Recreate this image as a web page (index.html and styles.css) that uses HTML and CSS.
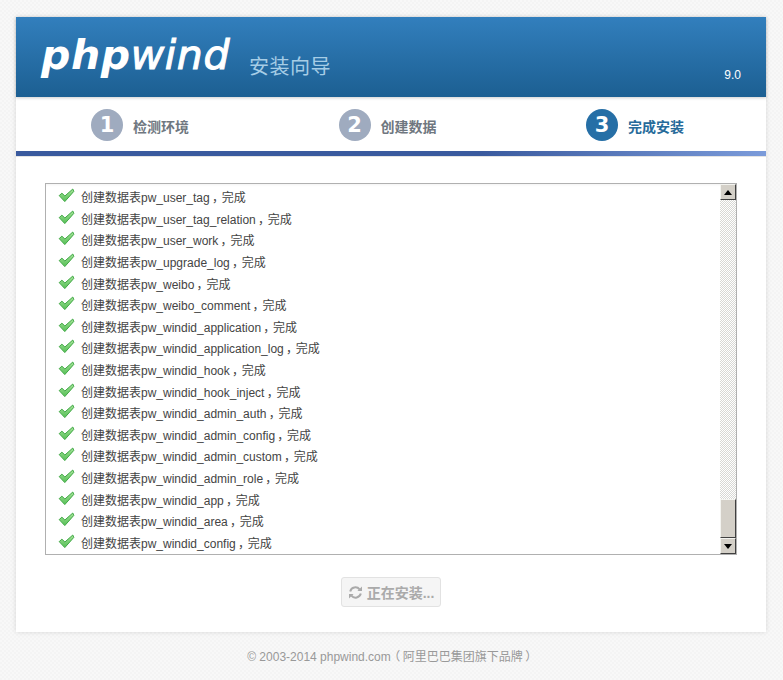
FILE: index.html
```html
<!DOCTYPE html>
<html lang="zh-CN">
<head>
<meta charset="utf-8">
<title>phpwind 安装向导</title>
<link rel="stylesheet" href="styles.css">
</head>
<body>
<svg class="defs" width="0" height="0" aria-hidden="true">
  <symbol id="ok" viewBox="0 0 17 15">
    <defs>
      <linearGradient id="okfill" x1="0" y1="0" x2="0" y2="1">
        <stop offset="0" stop-color="#a6e39a"/>
        <stop offset="1" stop-color="#55bf55"/>
      </linearGradient>
    </defs>
    <path d="M1.2 7.6 3.9 5.2l3 2.8L14.8 1l1 2.4-9 10.2z" fill="url(#okfill)" stroke="#3fa844" stroke-width="1" stroke-linejoin="round"/>
  </symbol>
</svg>
<div class="wrap">
  <header class="top">
    <div class="logo">php<span class="logo-thin">wind</span></div>
    <div class="guide">安装向导</div>
    <div class="ver">9.0</div>
  </header>
  <ol class="steps">
    <li class="step"><span class="num">1</span><span class="label">检测环境</span></li>
    <li class="step"><span class="num">2</span><span class="label">创建数据</span></li>
    <li class="step current"><span class="num">3</span><span class="label">完成安装</span></li>
  </ol>
  <div class="bar"></div>
  <main class="main">
    <div class="box">
      <ul class="log">
        <li class="row"><svg class="ok"><use href="#ok"/></svg><span>创建数据表pw_user_tag<span class="punct">，</span>完成</span></li>
        <li class="row"><svg class="ok"><use href="#ok"/></svg><span>创建数据表pw_user_tag_relation<span class="punct">，</span>完成</span></li>
        <li class="row"><svg class="ok"><use href="#ok"/></svg><span>创建数据表pw_user_work<span class="punct">，</span>完成</span></li>
        <li class="row"><svg class="ok"><use href="#ok"/></svg><span>创建数据表pw_upgrade_log<span class="punct">，</span>完成</span></li>
        <li class="row"><svg class="ok"><use href="#ok"/></svg><span>创建数据表pw_weibo<span class="punct">，</span>完成</span></li>
        <li class="row"><svg class="ok"><use href="#ok"/></svg><span>创建数据表pw_weibo_comment<span class="punct">，</span>完成</span></li>
        <li class="row"><svg class="ok"><use href="#ok"/></svg><span>创建数据表pw_windid_application<span class="punct">，</span>完成</span></li>
        <li class="row"><svg class="ok"><use href="#ok"/></svg><span>创建数据表pw_windid_application_log<span class="punct">，</span>完成</span></li>
        <li class="row"><svg class="ok"><use href="#ok"/></svg><span>创建数据表pw_windid_hook<span class="punct">，</span>完成</span></li>
        <li class="row"><svg class="ok"><use href="#ok"/></svg><span>创建数据表pw_windid_hook_inject<span class="punct">，</span>完成</span></li>
        <li class="row"><svg class="ok"><use href="#ok"/></svg><span>创建数据表pw_windid_admin_auth<span class="punct">，</span>完成</span></li>
        <li class="row"><svg class="ok"><use href="#ok"/></svg><span>创建数据表pw_windid_admin_config<span class="punct">，</span>完成</span></li>
        <li class="row"><svg class="ok"><use href="#ok"/></svg><span>创建数据表pw_windid_admin_custom<span class="punct">，</span>完成</span></li>
        <li class="row"><svg class="ok"><use href="#ok"/></svg><span>创建数据表pw_windid_admin_role<span class="punct">，</span>完成</span></li>
        <li class="row"><svg class="ok"><use href="#ok"/></svg><span>创建数据表pw_windid_app<span class="punct">，</span>完成</span></li>
        <li class="row"><svg class="ok"><use href="#ok"/></svg><span>创建数据表pw_windid_area<span class="punct">，</span>完成</span></li>
        <li class="row"><svg class="ok"><use href="#ok"/></svg><span>创建数据表pw_windid_config<span class="punct">，</span>完成</span></li>
      </ul>
      <div class="sb">
        <div class="sb-btn"><svg width="8" height="5" viewBox="0 0 8 5"><path d="M4 0 8 5H0z" fill="#000"/></svg></div>
        <div class="sb-track"></div>
        <div class="sb-thumb"></div>
        <div class="sb-btn"><svg width="8" height="5" viewBox="0 0 8 5"><path d="M4 5 8 0H0z" fill="#000"/></svg></div>
      </div>
    </div>
    <div class="actions">
      <button class="btn" type="button" disabled>
        <svg class="spin" width="15" height="13" viewBox="0 0 15 13"><path d="M2.2 5.4A5.4 5.4 0 0 1 11.6 3.3M12.8 7.6A5.4 5.4 0 0 1 3.4 9.7" fill="none" stroke="#aaa" stroke-width="2"/><path d="M9.4 5H14V.6zM5.6 8H1v4.4z" fill="#aaa"/></svg>正在安装...
      </button>
    </div>
  </main>
</div>
<footer class="foot">© 2003-2014 phpwind.com<span class="punct">（</span>阿里巴巴集团旗下品牌<span class="punct">）</span></footer>
</body>
</html>
```
FILE: styles.css
```css
* { box-sizing: border-box; }
html, body { margin: 0; padding: 0; }
body {
  height: 680px;
  overflow: hidden;
  padding: 17px 17px 0 16px;
  background-color: #f8f8f8;
  background-image:
    linear-gradient(45deg, #f4f4f4 25%, transparent 25%, transparent 75%, #f4f4f4 75%),
    linear-gradient(45deg, #f4f4f4 25%, transparent 25%, transparent 75%, #f4f4f4 75%);
  background-size: 4px 4px;
  background-position: 0 0, 2px 2px;
  font-family: "Liberation Sans", "Noto Sans CJK SC", sans-serif;
  font-size: 12px;
  color: #333;
}
.defs { position: absolute; }
.punct {
  display: inline-block;
  width: 12px;
  text-align: center;
  font-feature-settings: "palt";
}
.wrap {
  width: 750px;
  height: 615px;
  background: #fff;
  box-shadow: 0 0 5px rgba(0, 0, 0, .13);
  display: flex;
  flex-direction: column;
}
.top {
  height: 80px;
  flex: none;
  display: flex;
  align-items: flex-start;
  background: linear-gradient(#327fbd, #1c5f92);
  box-shadow: 0 1px 3px rgba(0, 0, 0, .2);
  padding: 0 25px 0 25px;
}
.logo {
  font-family: "DejaVu Sans", sans-serif;
  font-style: italic;
  font-weight: 700;
  font-size: 41px;
  line-height: 50px;
  letter-spacing: .6px;
  color: #fff;
  margin-top: 13px;
  width: 208px;
  flex: none;
}
.logo-thin {
  font-weight: 400;
  -webkit-text-stroke: 1px #fff;
}
.guide {
  font-size: 20px;
  line-height: 28px;
  color: #a6cde6;
  letter-spacing: .5px;
  margin-top: 36px;
  flex: 1;
}
.ver {
  color: #fff;
  line-height: 14px;
  margin-top: 51px;
}
.steps {
  list-style: none;
  margin: 0;
  padding: 12px 0 0 75px;
  height: 54px;
  flex: none;
  display: grid;
  grid-template-columns: 247.5px 247.5px 1fr;
}
.step { display: flex; align-items: flex-start; }
.num {
  width: 32px;
  height: 32px;
  border-radius: 50%;
  background: #9fabbf;
  color: #fff;
  font-family: "DejaVu Sans", sans-serif;
  font-weight: 700;
  font-size: 21px;
  line-height: 33px;
  text-align: center;
  margin-right: 10px;
}
.label {
  font-size: 14px;
  line-height: 20px;
  font-weight: 700;
  color: #6f7780;
  margin-top: 8px;
}
.current .num { background: #266fa6; }
.current .label { color: #266a9a; }
.bar {
  height: 5px;
  flex: none;
  background: linear-gradient(90deg, #3a5a9e 0, #3a5a9e 62%, #7b9bda 100%);
  box-shadow: 0 1px 0 #e4e4e4;
}
.main { padding: 27px 29px 0; flex: 1; }
.box {
  height: 372px;
  width: 692px;
  border: 1px solid #b0b0b0;
  box-shadow: inset 0 3px 3px -2px rgba(0, 0, 0, .05);
  display: flex;
}
.log {
  list-style: none;
  margin: 0;
  padding: 4px 0 0 12px;
  flex: 1;
  overflow: hidden;
}
.row {
  height: 21.6px;
  line-height: 21px;
  display: flex;
  align-items: center;
  color: #444;
}
.ok { width: 17px; height: 15px; margin-right: 6px; position: relative; top: -3px; flex: none; }
.sb {
  width: 16px;
  flex: none;
  display: flex;
  flex-direction: column;
}
.sb-btn {
  height: 16px;
  flex: none;
  background: #d4d0c8;
  border: 1px solid;
  border-color: #f4f4f0 #404040 #404040 #f4f4f0;
  display: flex;
  align-items: center;
  justify-content: center;
}
.sb-track {
  flex: 1;
  background-color: #fff;
  background-image: conic-gradient(#d8d8d4 25%, #fff 0 50%, #d8d8d4 0 75%, #fff 0);
  background-size: 2px 2px;
}
.sb-thumb {
  height: 39px;
  flex: none;
  background: #d4d0c8;
  border: 1px solid;
  border-color: #f4f4f0 #404040 #404040 #f4f4f0;
}
.actions { display: flex; justify-content: center; padding-top: 22px; }
.btn {
  width: 100px;
  height: 30px;
  padding: 0;
  background: #f5f5f5;
  border: 1px solid #e2e2e2;
  border-radius: 3px;
  color: #aaa;
  font-family: "Liberation Sans", "Noto Sans CJK SC", sans-serif;
  font-size: 14px;
  font-weight: 700;
  display: flex;
  align-items: center;
  justify-content: center;
}
.spin { margin-right: 4px; flex: none; }
.foot {
  margin-top: 17px;
  width: 750px;
  text-align: center;
  color: #999;
  line-height: 16px;
}
```
